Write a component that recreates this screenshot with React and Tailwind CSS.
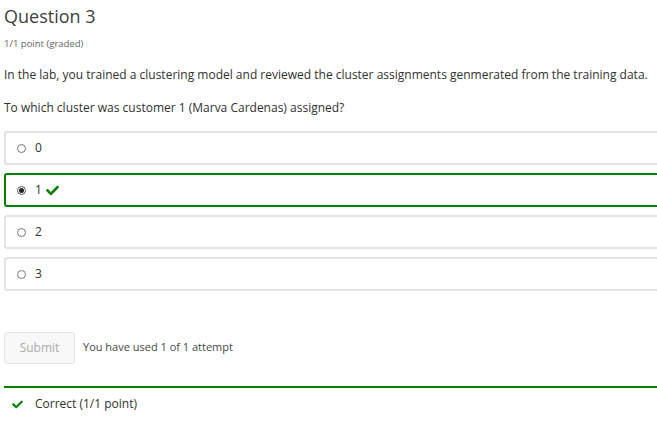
import React from 'react';

const options = ['0', '1', '2', '3'];

// font-awesome style check
const Check = ({ className }) => (
  <svg viewBox="0 40 512 430" className={className} fill="#008100">
    <path d="M173.898 439.404l-166.4-166.4c-9.997-9.997-9.997-26.206 0-36.204l36.203-36.204c9.997-9.998 26.207-9.998 36.204 0L192 312.69 432.095 72.596c9.997-9.997 26.207-9.997 36.204 0l36.203 36.204c9.997 9.997 9.997 26.206 0 36.204l-294.4 294.401c-9.998 9.997-26.207 9.997-36.204-.001z" />
  </svg>
);

const App = () => {
  const selected = '1';
  return (
    <div
      className="w-[657px] h-[435px] bg-white overflow-hidden pl-[4px] text-[#313131]"
      style={{ fontFamily: '"Open Sans", sans-serif' }}
    >
      <h2 className="text-[18px] leading-[24px] pt-[4px] text-[#414141]">Question 3</h2>
      <p className="text-[9.5px] leading-[14px] mt-[9px] text-[#646464]">1/1 point (graded)</p>
      <p className="text-[12px] leading-[16px] mt-[16px]">
        In the lab, you trained a clustering model and reviewed the cluster assignments genmerated from the training data.
      </p>
      <p className="text-[12px] leading-[16px] mt-[17px]">
        To which cluster was customer 1 (Marva Cardenas) assigned?
      </p>

      <div className="mt-[15px] flex flex-col gap-[8px] w-[680px]">
        {options.map((o) => {
          const isSel = o === selected;
          return (
            <div
              key={o}
              className={`h-[34px] rounded-[3px] border-2 flex items-center pl-[11px] ${
                isSel ? 'border-[#008100]' : 'border-[#e4e4e4]'
              }`}
            >
              <span
                className={`w-[9px] h-[9px] rounded-full border flex items-center justify-center ${
                  isSel ? 'border-[#555]' : 'border-[#777]'
                }`}
              >
                {isSel && <span className="w-[5px] h-[5px] rounded-full bg-[#222]" />}
              </span>
              <span className="ml-[9px] text-[12px] leading-[16px]">{o}</span>
              {isSel && <Check className="w-[13px] h-[11px] ml-[4px]" />}
            </div>
          );
        })}
      </div>

      <div className="mt-[41px] flex items-start gap-[8px]">
        <button className="w-[71px] h-[32px] rounded-[3px] border border-[#e4e4e4] bg-[#f8f8f8] text-[12px] text-[#ababab]">
          Submit
        </button>
        <span className="text-[11px] leading-[14px] mt-[8px] text-[#4a4a4a]">You have used 1 of 1 attempt</span>
      </div>

      <div className="mt-[22px] w-[680px] border-t-2 border-[#008100] flex items-center h-[34px] pl-[8px]">
        <Check className="w-[11px] h-[9px]" />
        <span className="ml-[12px] text-[12px] leading-[16px] text-[#313131]">Correct (1/1 point)</span>
      </div>
    </div>
  );
};

export default App;
